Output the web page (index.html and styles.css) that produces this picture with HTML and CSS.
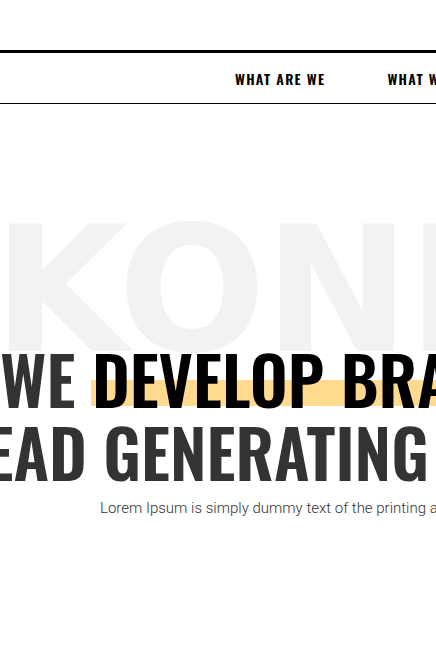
FILE: index.html
```html
<!DOCTYPE html>
<html lang="en">
<head>
<meta charset="utf-8">
<title>Koni</title>
<link rel="stylesheet" href="styles.css">
</head>
<body>
<header class="site-header">
  <nav class="main-nav">
    <a class="nav-link" href="#">What are we</a>
    <a class="nav-link" href="#">What we do</a>
    <a class="nav-link" href="#">Contact</a>
  </nav>
</header>
<section class="hero">
  <div class="hero-bg" aria-hidden="true">KONIK</div>
  <h1 class="hero-title">
    <span class="line line-1">WE <span class="mark">DEVELOP BRANDS &amp;</span></span>
    <span class="line line-2">LEAD GENERATING WEBSITES</span>
  </h1>
  <p class="hero-sub">Lorem Ipsum is simply dummy text of the printing and typesetting industry.</p>
</section>
</body>
</html>
```
FILE: styles.css
```css
html, body {
  margin: 0;
  padding: 0;
  overflow: hidden;
  background: #fff;
}
body {
  width: 436px;
  height: 654px;
}
.site-header {
  margin-top: 50px;
  border-top: 3px solid #000;
  border-bottom: 1px solid #000;
  height: 50px;
  display: flex;
  align-items: center;
}
.main-nav {
  display: flex;
  gap: 62px;
  padding-left: 235px;
  white-space: nowrap;
}
.nav-link {
  font-family: "Oswald", "Roboto Condensed", sans-serif;
  font-weight: 600;
  font-size: 14px;
  letter-spacing: 1.3px;
  text-transform: uppercase;
  color: #000;
  text-decoration: none;
}
.hero {
  position: relative;
  padding-top: 238px;
}
.hero-bg {
  position: absolute;
  top: 100px;
  left: -7px;
  font-family: "DejaVu Sans", sans-serif;
  font-weight: 700;
  font-size: 174px;
  letter-spacing: -2px;
  line-height: 1;
  color: #f2f2f2;
  white-space: nowrap;
  z-index: 0;
}
.hero-title {
  position: relative;
  z-index: 1;
  margin: 0;
  font-family: "Oswald", sans-serif;
  font-weight: 600;
  font-size: 66px;
  line-height: 73px;
  color: #333;
  white-space: nowrap;
}
.line {
  display: block;
  height: 73px;
}
.line-2 {
  margin-left: -44px;
}
.mark {
  position: relative;
  color: #000;
  z-index: 0;
}
.mark::before {
  content: "";
  position: absolute;
  left: -1px;
  right: 0;
  bottom: 21px;
  height: 26px;
  background: #ffda8f;
  z-index: -1;
}
.hero-sub {
  position: relative;
  z-index: 1;
  margin: 8px 0 0 100px;
  font-family: Roboto, sans-serif;
  font-weight: 300;
  font-size: 15px;
  line-height: 24px;
  color: #333;
  white-space: nowrap;
}
```
